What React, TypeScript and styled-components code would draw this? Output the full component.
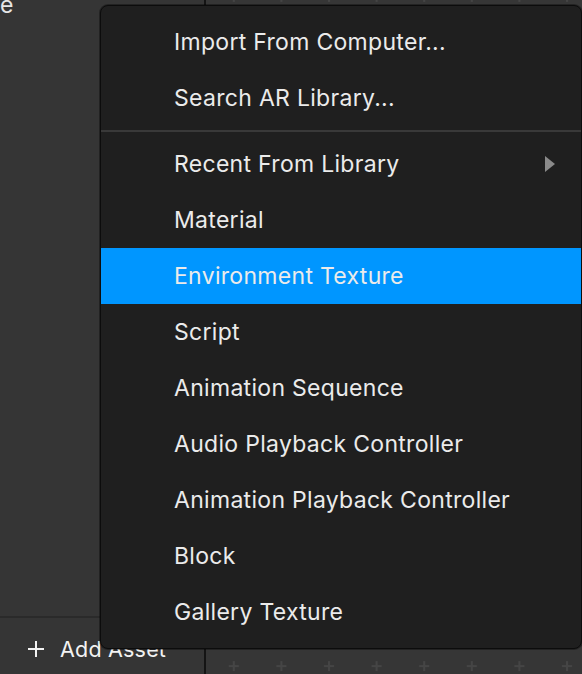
import { createGlobalStyle, styled } from 'styled-components'

const GlobalStyle = createGlobalStyle`
    html, body {
        margin: 0;
        padding: 0;
        background: #353535;
        font-family: Inter, "Noto Sans", sans-serif;
        -webkit-font-smoothing: antialiased;
    }
    * { box-sizing: border-box; }
`

type Item = { label: string; submenu?: boolean; active?: boolean }

const groups: Item[][] = [
    [{ label: 'Import From Computer...' }, { label: 'Search AR Library...' }],
    [
        { label: 'Recent From Library', submenu: true },
        { label: 'Material' },
        { label: 'Environment Texture', active: true },
        { label: 'Script' },
        { label: 'Animation Sequence' },
        { label: 'Audio Playback Controller' },
        { label: 'Animation Playback Controller' },
        { label: 'Block' },
        { label: 'Gallery Texture' },
    ],
]

const PlusGrid = () => (
    <GridSvg width="100%" height="100%">
        <defs>
            <pattern id="plus" x="4" y="-27" width="47.6" height="47.8" patternUnits="userSpaceOnUse">
                <path d="M23.8 18.9v10M18.8 23.9h10" stroke="#454545" strokeWidth="2" />
            </pattern>
        </defs>
        <rect width="100%" height="100%" fill="url(#plus)" />
    </GridSvg>
)

export default function App() {
    return (
        <>
            <GlobalStyle />
            <Page>
                <Sidebar>
                    <AssetList>
                        <ClippedLabel>e</ClippedLabel>
                    </AssetList>
                    <SidebarFooter>
                        <AddButton>
                            <svg width="18" height="18" viewBox="0 0 18 18">
                                <path d="M9 1v16M1 9h16" stroke="#f2f2f2" strokeWidth="2" />
                            </svg>
                            Add Asset
                        </AddButton>
                    </SidebarFooter>
                </Sidebar>
                <Canvas>
                    <PlusGrid />
                </Canvas>
                <Menu>
                    {groups.map((group, gi) => (
                        <Group key={gi} $divided={gi > 0}>
                            {group.map(item => (
                                <MenuItem key={item.label} $active={item.active}>
                                    {item.label}
                                    {item.submenu && <SubArrow />}
                                </MenuItem>
                            ))}
                        </Group>
                    ))}
                </Menu>
            </Page>
        </>
    )
}

const Page = styled.div`
    position: relative;
    display: flex;
    width: 582px;
    height: 674px;
    overflow: hidden;
`

const Sidebar = styled.aside`
    width: 206px;
    flex-shrink: 0;
    display: flex;
    flex-direction: column;
    background: #353535;
    border-right: 2px solid #141414;
`

const AssetList = styled.div`
    flex: 1;
`

const ClippedLabel = styled.div`
    margin-top: -6px;
    font-size: 23px;
    line-height: 22px;
    letter-spacing: 0.3px;
    color: #e6e6e6;
`

const SidebarFooter = styled.div`
    height: 58px;
    border-top: 2px solid #2a2a2a;
    display: flex;
    align-items: center;
    padding-left: 27px;
`

const AddButton = styled.div`
    display: flex;
    align-items: center;
    gap: 15px;
    font-size: 21.5px;
    letter-spacing: 0.2px;
    color: #f2f2f2;
    margin-top: 6px;
`

const Canvas = styled.main`
    position: relative;
    flex: 1;
    background: #363636;
`

const GridSvg = styled.svg`
    position: absolute;
    inset: 0;
    display: block;
`

const Menu = styled.div`
    position: absolute;
    left: 100px;
    top: 5px;
    width: 482px;
    height: 644px;
    padding: 8px 0;
    background: #1f1f1f;
    border: 1px solid #0c0c0c;
    border-radius: 8px;
    box-shadow: 0 0 0 1px rgba(0, 0, 0, 0.35);
`

const Group = styled.div<{ $divided?: boolean }>`
    ${props => props.$divided && `
        margin-top: 4px;
        padding-top: 4px;
        border-top: 2px solid #393939;
    `}
`

const MenuItem = styled.div<{ $active?: boolean }>`
    position: relative;
    height: 56px;
    display: flex;
    align-items: center;
    padding-left: 73px;
    font-size: 23px;
    letter-spacing: 0.3px;
    color: #ebebeb;
    background: ${props => (props.$active ? '#0096ff' : 'transparent')};
`

const SubArrow = styled.span`
    position: absolute;
    right: 26px;
    top: 50%;
    transform: translateY(-50%);
    width: 0;
    height: 0;
    border-top: 8px solid transparent;
    border-bottom: 8px solid transparent;
    border-left: 10px solid #8a8a8a;
`
